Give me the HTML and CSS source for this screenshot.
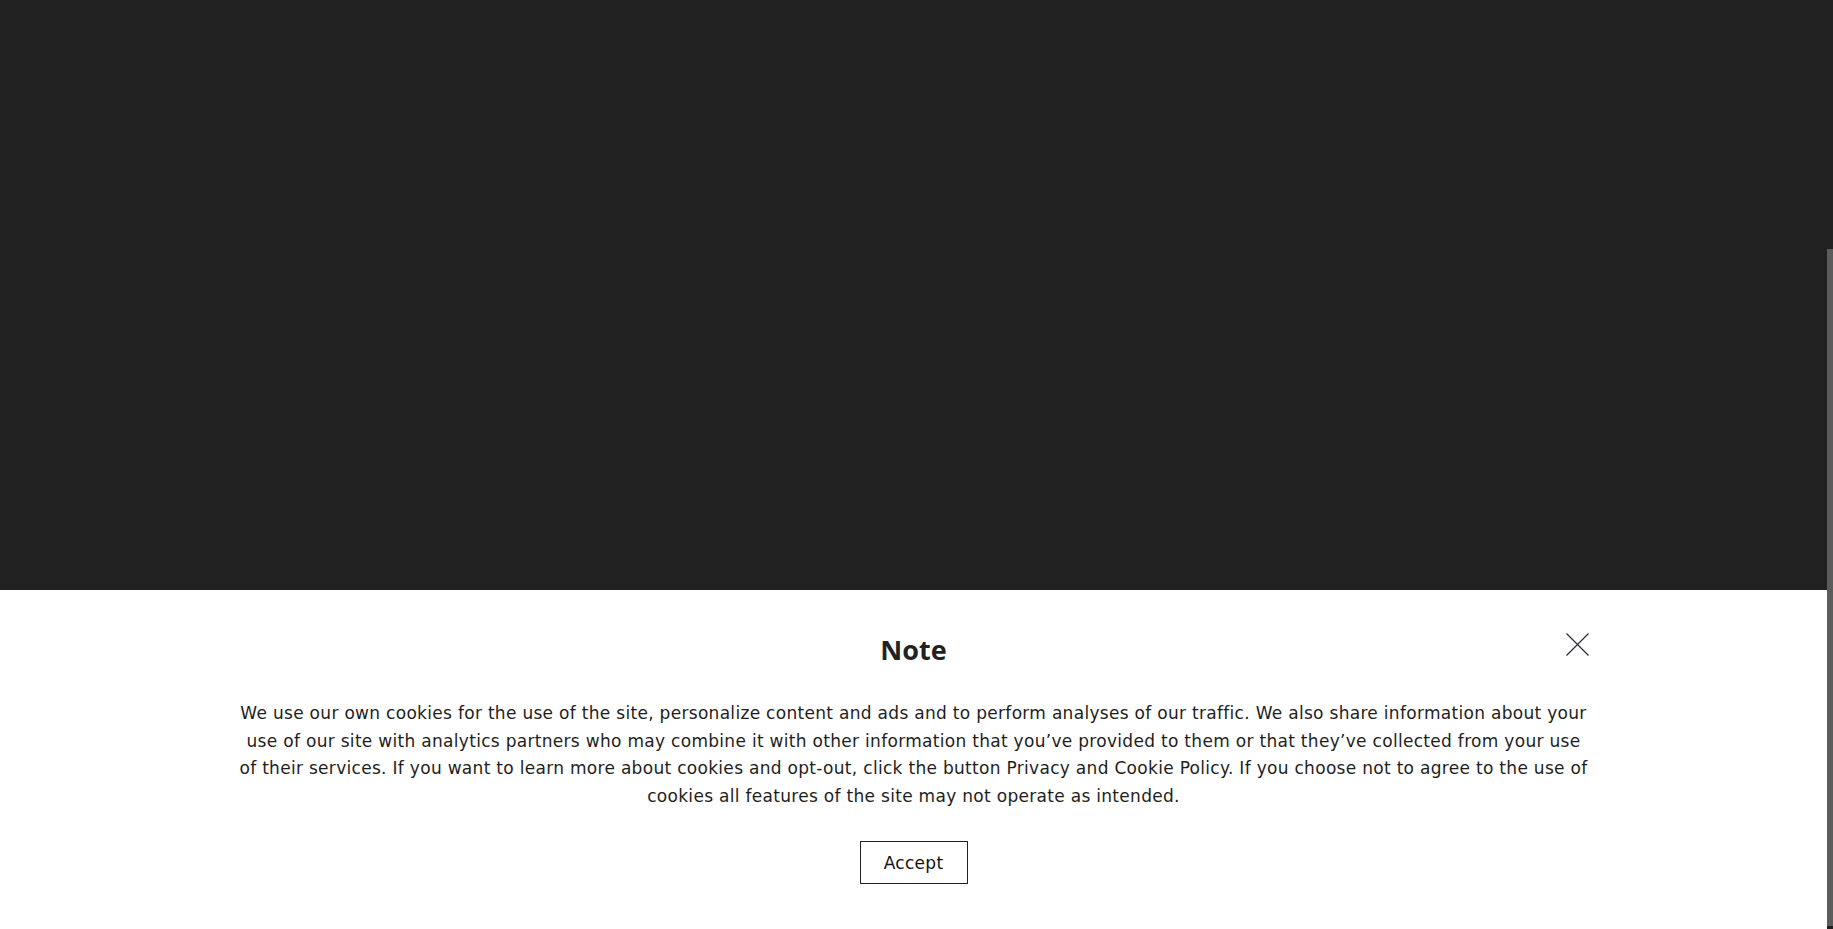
FILE: index.html
```html
<!DOCTYPE html>
<html lang="en">
<head>
<meta charset="utf-8">
<title>Note</title>
<link rel="stylesheet" href="styles.css">
</head>
<body>
<div class="page">
  <div class="main">
    <div class="backdrop"></div>
    <div class="notice">
      <button class="close" aria-label="Close">
        <svg width="23" height="23" viewBox="0 0 23 23"><path d="M0.5 0.5 L22.5 22.5 M22.5 0.5 L0.5 22.5" stroke="#2b2b3a" stroke-width="1.2" fill="none"/></svg>
      </button>
      <h2 class="title">Note</h2>
      <p class="text">We use our own cookies for the use of the site, personalize content and ads and to perform analyses of our traffic. We also share information about your use of our site with analytics partners who may combine it with other information that you’ve provided to them or that they’ve collected from your use of their services. If you want to learn more about cookies and opt-out, click the button Privacy and Cookie Policy. If you choose not to agree to the use of cookies all features of the site may not operate as intended.</p>
      <button class="accept">Accept</button>
    </div>
  </div>
  <div class="scrollbar"><div class="thumb"></div></div>
</div>
</body>
</html>
```
FILE: styles.css
```css
html, body {
  margin: 0;
  padding: 0;
  height: 100%;
  overflow: hidden;
}
.page {
  display: flex;
  height: 929px;
  background: #212121;
}
.main {
  flex: 1;
  display: flex;
  flex-direction: column;
}
.backdrop {
  flex: 0 0 590px;
  background: #212121;
}
.notice {
  flex: 1;
  position: relative;
  background: #fff;
  text-align: center;
  padding-top: 44px;
  color: #222;
}
.close {
  position: absolute;
  top: 43px;
  right: 238px;
  width: 23px;
  height: 23px;
  padding: 0;
  border: 0;
  background: none;
  cursor: pointer;
}
.close svg { display: block; }
.title {
  margin: 0;
  font-family: "Open Sans", "Noto Sans", sans-serif;
  font-weight: 700;
  font-size: 27px;
  line-height: 32px;
  color: #222;
}
.text {
  margin: 34px auto 0;
  max-width: 1352px;
  font-family: "DejaVu Sans", sans-serif;
  font-size: 17px;
  letter-spacing: 0.3px;
  line-height: 27.5px;
  color: #1e1e1e;
}
.accept {
  margin-top: 31px;
  width: 108px;
  height: 43px;
  background: #fff;
  border: 1px solid #222;
  font-family: "DejaVu Sans", sans-serif;
  font-size: 17px;
  letter-spacing: 0.3px;
  color: #111;
  cursor: pointer;
}
.scrollbar {
  flex: 0 0 6px;
  position: relative;
  background: #212121;
}
.thumb {
  position: absolute;
  top: 249px;
  bottom: 3px;
  left: 0;
  right: 0;
  background: #5c5c5c;
}
```
